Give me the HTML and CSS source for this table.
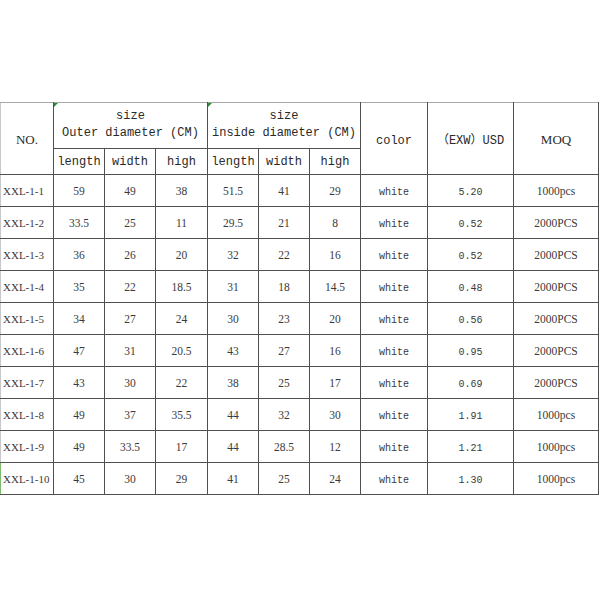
FILE: index.html
```html
<!DOCTYPE html>
<html>
<head>
<meta charset="utf-8">
<link rel="stylesheet" href="styles.css">
</head>
<body>
<table class="spec">
  <colgroup>
    <col class="c-no">
    <col class="c-d"><col class="c-d"><col class="c-d2">
    <col class="c-d"><col class="c-d"><col class="c-d">
    <col class="c-color"><col class="c-usd"><col class="c-moq">
  </colgroup>
  <thead>
    <tr class="h1">
      <th rowspan="2" class="serif">NO.</th>
      <th colspan="3" class="mark">size<br>Outer diameter (CM)</th>
      <th colspan="3" class="mark">size<br>inside diameter (CM)</th>
      <th rowspan="2" class="mid">color</th>
      <th rowspan="2" class="mid">（EXW）USD</th>
      <th rowspan="2" class="serif">MOQ</th>
    </tr>
    <tr class="h2">
      <th>length</th><th>width</th><th>high</th>
      <th>length</th><th>width</th><th>high</th>
    </tr>
  </thead>
  <tbody>
    <tr><td class="code">XXL-1-1</td><td>59</td><td>49</td><td>38</td><td>51.5</td><td>41</td><td>29</td><td class="mono">white</td><td class="mono">5.20</td><td>1000pcs</td></tr>
    <tr><td class="code">XXL-1-2</td><td>33.5</td><td>25</td><td>11</td><td>29.5</td><td>21</td><td>8</td><td class="mono">white</td><td class="mono">0.52</td><td>2000PCS</td></tr>
    <tr><td class="code">XXL-1-3</td><td>36</td><td>26</td><td>20</td><td>32</td><td>22</td><td>16</td><td class="mono">white</td><td class="mono">0.52</td><td>2000PCS</td></tr>
    <tr><td class="code">XXL-1-4</td><td>35</td><td>22</td><td>18.5</td><td>31</td><td>18</td><td>14.5</td><td class="mono">white</td><td class="mono">0.48</td><td>2000PCS</td></tr>
    <tr><td class="code">XXL-1-5</td><td>34</td><td>27</td><td>24</td><td>30</td><td>23</td><td>20</td><td class="mono">white</td><td class="mono">0.56</td><td>2000PCS</td></tr>
    <tr><td class="code">XXL-1-6</td><td>47</td><td>31</td><td>20.5</td><td>43</td><td>27</td><td>16</td><td class="mono">white</td><td class="mono">0.95</td><td>2000PCS</td></tr>
    <tr><td class="code">XXL-1-7</td><td>43</td><td>30</td><td>22</td><td>38</td><td>25</td><td>17</td><td class="mono">white</td><td class="mono">0.69</td><td>2000PCS</td></tr>
    <tr><td class="code">XXL-1-8</td><td>49</td><td>37</td><td>35.5</td><td>44</td><td>32</td><td>30</td><td class="mono">white</td><td class="mono">1.91</td><td>1000pcs</td></tr>
    <tr><td class="code">XXL-1-9</td><td>49</td><td>33.5</td><td>17</td><td>44</td><td>28.5</td><td>12</td><td class="mono">white</td><td class="mono">1.21</td><td>1000pcs</td></tr>
    <tr><td class="code last">XXL-1-10</td><td>45</td><td>30</td><td>29</td><td>41</td><td>25</td><td>24</td><td class="mono">white</td><td class="mono">1.30</td><td>1000pcs</td></tr>
  </tbody>
</table>
</body>
</html>
```

FILE: styles.css
```css
html, body {
  margin: 0;
  padding: 0;
  background: #ffffff;
}

body {
  padding-top: 102px;
}

.spec {
  border-collapse: collapse;
  table-layout: fixed;
  width: 598px;
  font-family: "Liberation Serif", "Noto Sans CJK SC", serif;
  color: #3a3a3a;
}

.c-no { width: 53px; }
.c-d { width: 51px; }
.c-d2 { width: 52px; }
.c-color { width: 67px; }
.c-usd { width: 86px; }
.c-moq { width: 85px; }

.spec th,
.spec td {
  border: 1px solid #505050;
  padding: 0;
  text-align: center;
  vertical-align: middle;
  white-space: nowrap;
  overflow: hidden;
}

.spec thead tr.h1 th {
  border-top-color: #a8a8a8;
}

.spec tr > :first-child {
  border-left-color: #c8c8c8;
}

.spec th {
  font-family: "Liberation Mono", "Noto Sans CJK SC", monospace;
  font-weight: normal;
  font-size: 12px;
  line-height: 17px;
  color: #2a2a2a;
}

.spec .h1 th {
  padding-bottom: 2px;
}

.spec .h1 th.mid {
  padding-bottom: 0;
  padding-top: 5px;
}

.spec th.serif {
  font-family: "Liberation Serif", "Noto Sans CJK SC", serif;
  font-size: 13px;
  padding-top: 3px;
}

.spec th.mark {
  position: relative;
}

.spec th.mark::before {
  content: "";
  position: absolute;
  left: 0;
  top: 0;
  border-top: 4px solid #2f8a3a;
  border-right: 4px solid transparent;
}

.h1 { height: 46px; }
.h2 { height: 26px; }

.spec .h2 th {
  padding-top: 2px;
}

.spec tbody tr { height: 32px; }

.spec td {
  font-size: 11.5px;
  padding-top: 1px;
}

.spec td.code {
  font-size: 11px;
  text-align: left;
  padding-left: 2px;
}

.spec td.last {
  border-left-color: #7dbb6e;
}

.spec td.mono {
  font-family: "Liberation Mono", "Noto Sans CJK SC", monospace;
  font-size: 10px;
  padding-top: 3px;
}
```
